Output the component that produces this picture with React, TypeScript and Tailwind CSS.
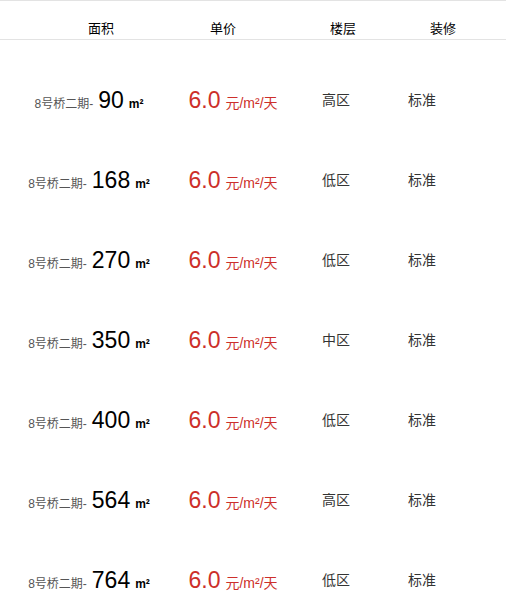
import React from 'react'

const rows = [
  { area: '90', floor: '高区' },
  { area: '168', floor: '低区' },
  { area: '270', floor: '低区' },
  { area: '350', floor: '中区' },
  { area: '400', floor: '低区' },
  { area: '564', floor: '高区' },
  { area: '764', floor: '低区' },
]

const font = { fontFamily: '"Liberation Sans", Arial, "Noto Sans CJK SC", sans-serif' }

const App = () => {
  return (
    <div className="w-[506px] h-[608px] overflow-hidden bg-white" style={font}>
      <div className="h-10 border-t border-b border-[#e3e3e3] grid grid-cols-[178px_110px_96px_76px] items-end pb-px text-[13px] text-black">
        <div className="text-center pl-6">面积</div>
        <div className="text-center pr-5">单价</div>
        <div className="text-center pl-[14px]">楼层</div>
        <div className="text-center pl-[42px]">装修</div>
      </div>
      <div className="pt-5">
        {rows.map((r, i) => (
          <div key={i} className="h-20 grid grid-cols-[178px_110px_96px_76px] items-center">
            <div className="text-center whitespace-nowrap">
              <span className="text-xs text-[#555]">8号桥二期-</span>
              <span className="text-[23px] text-black mx-[5px]">{r.area}</span>
              <span className="text-xs font-bold text-black">m²</span>
            </div>
            <div className="text-center whitespace-nowrap text-[#cd2f2a]">
              <span className="text-[23px]">6.0</span>
              <span className="text-sm ml-[5px]">元/m²/天</span>
            </div>
            <div className="text-center text-sm text-[#333]">{r.floor}</div>
            <div className="text-center text-sm text-[#333]">标准</div>
          </div>
        ))}
      </div>
    </div>
  )
}

export default App
